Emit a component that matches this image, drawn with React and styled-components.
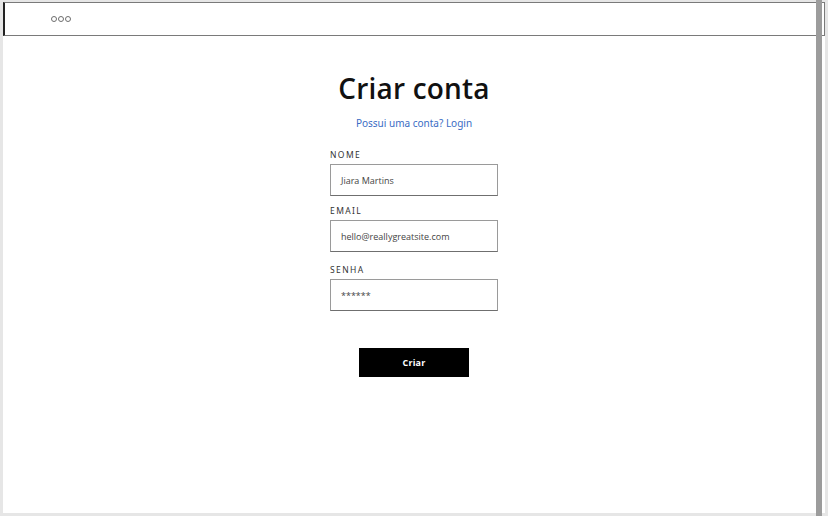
import React from "react";
import styled, { createGlobalStyle } from "styled-components";

const Global = createGlobalStyle`
  html, body { margin: 0; padding: 0; }
  body { background: #e6e6e6; font-family: "Open Sans", "Noto Sans", sans-serif; }
  * { box-sizing: border-box; }
`;

const Frame = styled.div`
  position: relative;
  width: 828px;
  height: 516px;
  background: #e6e6e6;
  padding: 2px 0 3px 3px;
  overflow: hidden;
`;

const Sheet = styled.div`
  width: 822px;
  height: 511px;
  background: #ffffff;
  display: flex;
  flex-direction: column;
`;

const Header = styled.header`
  height: 34px;
  border: 1px solid #7a7a7a;
  border-left: 2px solid #222;
  display: flex;
  align-items: center;
  padding-left: 46px;
`;

const Dots = styled.div`
  display: flex;
  gap: 1px;
  margin-top: -1px;
`;

const Dot = styled.span`
  width: 6px;
  height: 6px;
  border: 1.5px solid #6e6e6e;
  border-radius: 50%;
`;

const Scrollbar = styled.div`
  position: absolute;
  top: 0;
  left: 816px;
  width: 6px;
  height: 516px;
  background: #9c9c9c;
`;

const Main = styled.main`
  flex: 1;
  display: flex;
  flex-direction: column;
  align-items: center;
  padding-top: 34px;
`;

const Title = styled.h1`
  margin: 0;
  font-family: "Open Sans", sans-serif;
  font-weight: 600;
  font-size: 28px;
  line-height: 36px;
  color: #111;
  letter-spacing: 0.2px;
`;

const LoginLink = styled.a`
  margin-top: 10px;
  font-family: "Noto Sans", sans-serif;
  font-size: 10px;
  line-height: 14px;
  color: #3a6cc4;
  text-decoration: none;
`;

const Form = styled.form`
  margin-top: 19px;
  width: 168px;
  display: flex;
  flex-direction: column;
`;

const Field = styled.div`
  display: flex;
  flex-direction: column;
  margin-bottom: ${(p) => p.$gap}px;
`;

const Label = styled.label`
  font-family: "Noto Sans", sans-serif;
  font-size: 8.5px;
  font-weight: 400;
  letter-spacing: 1.4px;
  color: #333;
  line-height: 11px;
  margin-bottom: 4px;
`;

const Input = styled.div`
  height: 32px;
  border: 1px solid #9a9a9a;
  border-bottom-color: #6f6f6f;
  display: flex;
  align-items: center;
  padding-left: 10px;
  font-family: "Open Sans", sans-serif;
  font-size: 9px;
  color: #444;
`;

const Button = styled.button`
  margin-top: 37px;
  width: 110px;
  height: 29px;
  background: #000;
  color: #fff;
  border: none;
  font-family: "Open Sans", sans-serif;
  font-weight: 700;
  font-size: 9px;
  letter-spacing: 0.2px;
`;

export default function App() {
  return (
    <>
      <Global />
      <Frame>
        <Sheet>
          <Header>
            <Dots>
              <Dot />
              <Dot />
              <Dot />
            </Dots>
          </Header>
          <Main>
            <Title>Criar conta</Title>
            <LoginLink href="#">Possui uma conta? Login</LoginLink>
            <Form>
              <Field $gap={9}>
                <Label>NOME</Label>
                <Input>Jiara Martins</Input>
              </Field>
              <Field $gap={12}>
                <Label>EMAIL</Label>
                <Input>hello@reallygreatsite.com</Input>
              </Field>
              <Field $gap={0}>
                <Label>SENHA</Label>
                <Input>******</Input>
              </Field>
            </Form>
            <Button type="button">Criar</Button>
          </Main>
        </Sheet>
        <Scrollbar />
      </Frame>
    </>
  );
}
